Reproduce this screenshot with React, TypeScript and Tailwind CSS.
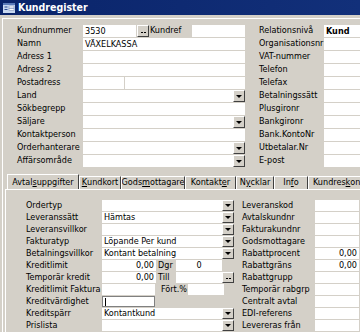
import React from 'react';

const FONT = "font-['DejaVu_Sans_Condensed','DejaVu_Sans',sans-serif]";

function DropBtn() {
  return (
    <div className="w-[12px] h-full shrink-0 bg-[#d4d0c8] border-t border-l border-t-white border-l-white border-r border-b border-r-[#404040] border-b-[#404040] flex items-center justify-center">
      <div className="w-0 h-0 border-l-[3px] border-r-[3px] border-t-[3px] border-l-transparent border-r-transparent border-t-black" />
    </div>
  );
}

function DotsBtn() {
  return (
    <div className="w-[12px] h-full shrink-0 bg-[#d4d0c8] border-t border-l border-t-white border-l-white border-r border-b border-r-[#404040] border-b-[#404040] flex items-end justify-center gap-[1px] pb-[3px]">
      <div className="w-[2px] h-[1px] bg-black" />
      <div className="w-[2px] h-[1px] bg-black" />
    </div>
  );
}

type FieldProps = {
  w?: string;
  value?: string;
  right?: boolean;
  center?: boolean;
  bold?: boolean;
  drop?: boolean;
  dots?: boolean;
  className?: string;
};

function Field({ w = 'flex-1', value, right, center, bold, drop, dots, className = '' }: FieldProps) {
  return (
    <div className={`${w} h-full bg-white flex ${className}`}>
      <div
        className={`flex-1 min-w-0 px-[2px] leading-none flex items-center whitespace-nowrap overflow-hidden ${
          right ? 'justify-end' : center ? 'justify-center' : ''
        } ${bold ? 'font-bold' : ''}`}
      >
        {value}
      </div>
      {drop && <DropBtn />}
      {dots && <DotsBtn />}
    </div>
  );
}

function TopRow({ label, children, rlabel, rvalue, rbold }: { label: string; children: React.ReactNode; rlabel: string; rvalue?: string; rbold?: boolean }) {
  return (
    <div className="h-[13px] flex pb-[1px]">
      <div className="w-[66px] shrink-0 flex items-center whitespace-nowrap">{label}</div>
      <div className="w-[162px] shrink-0 flex">{children}</div>
      <div className="w-[14px] shrink-0" />
      <div className="w-[65px] shrink-0 flex items-center whitespace-nowrap">{rlabel}</div>
      <Field w="w-[60px] shrink-0" value={rvalue} bold={rbold} />
    </div>
  );
}

function PanelRow({ label, children, rlabel, rvalue }: { label: string; children: React.ReactNode; rlabel: string; rvalue?: string }) {
  return (
    <div className="h-[12px] flex pb-[1px]">
      <div className="w-[76px] shrink-0 flex items-center whitespace-nowrap">{label}</div>
      <div className="w-[132px] shrink-0 flex">{children}</div>
      <div className="w-[8px] shrink-0" />
      <div className="w-[73px] shrink-0 flex items-center whitespace-nowrap">{rlabel}</div>
      <Field w="w-[44px] shrink-0" value={rvalue} right />
    </div>
  );
}

function Tab({ children, active, w }: { children: React.ReactNode; active?: boolean; w: string }) {
  if (active) {
    return (
      <div className={`${w} shrink-0 h-[16px] -mb-[1px] relative z-10 bg-[#d4d0c8] border-t border-l border-t-white border-l-white border-r border-r-[#404040] flex items-center justify-center whitespace-nowrap`}>
        {children}
      </div>
    );
  }
  return (
    <div className={`${w} shrink-0 h-[13px] border-t border-l border-t-white border-l-white border-r border-r-[#404040] flex items-center justify-center whitespace-nowrap overflow-hidden`}>
      {children}
    </div>
  );
}

export default function App() {
  return (
    <div className={`w-[360px] h-[332px] overflow-hidden bg-[#d4d0c8] text-black text-[9px] ${FONT}`}>
      {/* title bar */}
      <div className="h-[15px] bg-gradient-to-r from-[#0a246a] to-[#12307a] flex items-center pl-[3px] gap-[3px]">
        <svg width="12" height="10" viewBox="0 0 12 10">
          <rect x="0" y="0" width="12" height="10" fill="#c8d8f0" />
          <rect x="0" y="0" width="12" height="2" fill="#5a7ab8" />
          <rect x="1.5" y="3.5" width="3" height="1" fill="#2a4a90" />
          <rect x="1.5" y="6" width="3" height="1" fill="#2a4a90" />
          <rect x="6" y="3" width="5" height="2" fill="#ffffff" stroke="#6a80b0" strokeWidth="0.5" />
          <rect x="6" y="5.5" width="5" height="2" fill="#ffffff" stroke="#6a80b0" strokeWidth="0.5" />
        </svg>
        <span className="text-white font-bold text-[10.5px] leading-none">Kundregister</span>
      </div>

      {/* window body */}
      <div className="ml-[2px] mt-[3px] h-[320px] border-l border-t border-l-white border-t-white">
        <div className="pl-[14px] pt-[6px]">
          <TopRow label="Kundnummer" rlabel="Relationsnivå" rvalue="Kund" rbold>
            <Field w="w-[53px] shrink-0" value="3530" />
            <div className="w-[1px]" />
            <DotsBtn />
            <div className="w-[43px] shrink-0 flex items-center pl-[1px]">Kundref</div>
            <Field w="w-[53px] shrink-0" />
          </TopRow>
          <TopRow label="Namn" rlabel="Organisationsnr">
            <Field value="VÄXELKASSA" />
          </TopRow>
          <TopRow label="Adress 1" rlabel="VAT-nummer">
            <Field />
          </TopRow>
          <TopRow label="Adress 2" rlabel="Telefon">
            <Field />
          </TopRow>
          <TopRow label="Postadress" rlabel="Telefax">
            <Field w="w-[41px] shrink-0" />
            <div className="w-[1px]" />
            <Field />
          </TopRow>
          <TopRow label="Land" rlabel="Betalningssätt">
            <Field drop />
          </TopRow>
          <TopRow label="Sökbegrepp" rlabel="Plusgironr">
            <Field />
          </TopRow>
          <TopRow label="Säljare" rlabel="Bankgironr">
            <Field drop />
          </TopRow>
          <TopRow label="Kontaktperson" rlabel=" Bank.KontoNr">
            <Field />
          </TopRow>
          <TopRow label="Orderhanterare" rlabel="Utbetalar.Nr">
            <Field drop />
          </TopRow>
          <TopRow label="Affärsområde" rlabel="E-post">
            <Field drop />
          </TopRow>
        </div>

        {/* tabs */}
        <div className="mt-[6px] pl-[4px] flex items-end overflow-hidden">
          <Tab active w="w-[72px]">
            Avtal<u>s</u>uppgifter
          </Tab>
          <Tab w="w-[42px]">
            <u>K</u>undkort
          </Tab>
          <Tab w="w-[64px]">
            Gods<u>m</u>ottagare
          </Tab>
          <Tab w="w-[51px]">
            Kontakt<u>e</u>r
          </Tab>
          <Tab w="w-[38px]">
            N<u>y</u>cklar
          </Tab>
          <Tab w="w-[34px]">
            In<u>f</u>o
          </Tab>
          <div className="w-[70px] shrink-0 h-[13px] border-t border-l border-t-white border-l-white flex items-center pl-[4px] whitespace-nowrap">
            Kundres<u>k</u>ontro
          </div>
        </div>

        {/* panel */}
        <div className="ml-[2px] h-[200px] border-t border-l border-t-white border-l-white pl-[20px] pt-[10px]">
          <PanelRow label="Ordertyp" rlabel="Leveranskod">
            <Field drop />
          </PanelRow>
          <PanelRow label="Leveranssätt" rlabel="Avtalskundnr">
            <Field value="Hämtas" drop />
          </PanelRow>
          <PanelRow label="Leveransvillkor" rlabel="Fakturakundnr">
            <Field drop />
          </PanelRow>
          <PanelRow label="Fakturatyp" rlabel="Godsmottagare">
            <Field value="Löpande Per kund" drop />
          </PanelRow>
          <PanelRow label="Betalningsvillkor" rlabel="Rabattprocent" rvalue="0,00">
            <Field value="Kontant betalning" drop />
          </PanelRow>
          <PanelRow label="Kreditlimit" rlabel="Rabattgräns" rvalue="0,00">
            <Field w="w-[54px] shrink-0" value="0,00" right />
            <div className="w-[20px] shrink-0 flex items-center pl-[2px]">Dgr</div>
            <Field w="w-[46px] shrink-0" value="0" center />
          </PanelRow>
          <PanelRow label="Temporär kredit" rlabel="Rabattgrupp">
            <Field w="w-[54px] shrink-0" value="0,00" right />
            <div className="w-[20px] shrink-0 flex items-center pl-[2px]">Till</div>
            <Field value="" dots />
          </PanelRow>
          <PanelRow label="Kreditlimit Faktura" rlabel="Temporär rabgrp">
            <Field w="w-[53px] shrink-0" />
            <div className="w-[33px] shrink-0 flex items-center pl-[6px]">Fört.%</div>
            <Field w="w-[36px] shrink-0" />
          </PanelRow>
          <PanelRow label="Kreditvärdighet" rlabel="Centralt avtal">
            <div className="w-[53px] h-full bg-white border border-[#808080] flex items-center pl-[2px]">
              <div className="w-[1px] h-[8px] bg-black" />
            </div>
          </PanelRow>
          <PanelRow label="Kreditspärr" rlabel="EDI-referens">
            <Field value="Kontantkund" drop />
          </PanelRow>
          <PanelRow label="Prislista" rlabel="Levereras från">
            <Field drop />
          </PanelRow>
        </div>
      </div>
    </div>
  );
}
